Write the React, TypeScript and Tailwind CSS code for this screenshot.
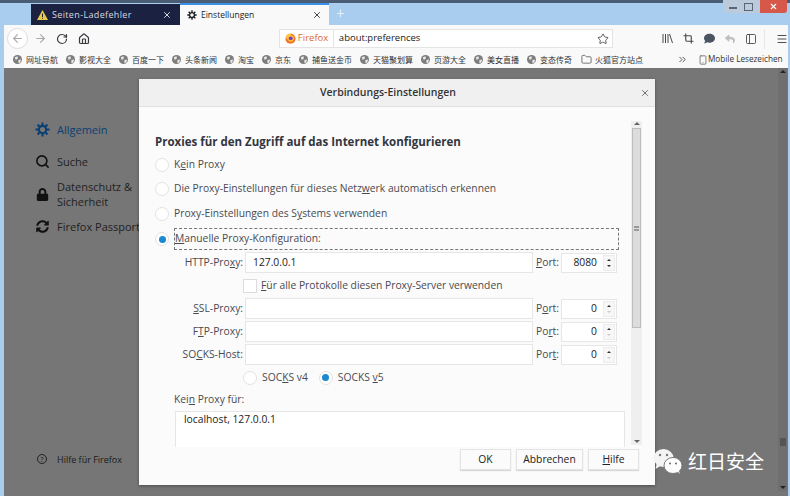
import { ArrowLeft, ArrowRight, ChevronsRight, Crop, Folder, Home, Menu, PanelLeft, Plus, RotateCw, Search, Smartphone, Star, X } from "lucide-react";
import { FaComment, FaLock, FaReply, FaSyncAlt } from "react-icons/fa";

const bookmarks = ["网址导航", "影视大全", "百度一下", "头条新闻", "淘宝", "京东", "捕鱼送金币", "天猫聚划算", "页游大全", "美女直播", "变态传奇"];

const Gear = ({ color, size }: { color: string; size: number }) => (
    <svg width={size} height={size} viewBox="0 0 16 16" fill="none">
        <g stroke={color} strokeWidth="2.2" strokeLinecap="butt">
            <path d="M8 0.5V3.5M8 12.5V15.5M0.5 8H3.5M12.5 8H15.5M2.7 2.7L4.8 4.8M11.2 11.2L13.3 13.3M2.7 13.3L4.8 11.2M11.2 4.8L13.3 2.7" />
        </g>
        <circle cx="8" cy="8" r="3.9" stroke={color} strokeWidth="2.2" />
    </svg>
);

const GlobeIcon = () => (
    <svg width="9" height="9" viewBox="0 0 10 10" className="shrink-0">
        <circle cx="5" cy="5" r="5" fill="#7d7d7d" />
        <path d="M2 2.5L5 1.5L5.5 4L3 5.5ZM6 5.5L9 5L8 8.5L6 9Z" fill="#e8e8e8" />
    </svg>
);

const FirefoxLogo = () => (
    <svg width="11" height="11" viewBox="0 0 14 14" className="shrink-0">
        <circle cx="7" cy="7.4" r="6.4" fill="#f36f24" />
        <path d="M1 5C2 1.500 6 0 9 0.800C7.500 1.500 7.500 2.500 8 3C10 3 11.500 4.500 11.500 7C11.500 9.500 9.500 11 7.500 11C5.500 11 4 9.800 3.800 8.500C2.500 8 1.500 6.500 1 5Z" fill="#ffc43d" />
        <circle cx="7.300" cy="6.800" r="2.500" fill="#7b3fc0" />
    </svg>
);

const Wechat = () => (
    <svg width="31" height="28" viewBox="0 0 31 28">
        <ellipse cx="11.500" cy="11" rx="10" ry="9" fill="#f4f4f4" />
        <path d="M5 16L3.500 22L10 18Z" fill="#f4f4f4" />
        <ellipse cx="21" cy="18.500" rx="9" ry="8" fill="#ffffff" stroke="#777777" strokeWidth="1" />
        <path d="M25 24L28 27L26 22Z" fill="#ffffff" />
        <circle cx="8" cy="8" r="1.200" fill="#777777" />
        <circle cx="15" cy="8" r="1.200" fill="#777777" />
        <circle cx="18" cy="16.500" r="1.100" fill="#777777" />
        <circle cx="24" cy="16.500" r="1.100" fill="#777777" />
    </svg>
);

const Radio = ({ checked }: { checked?: boolean }) => (
    <span className="flex h-[14px] w-[14px] shrink-0 items-center justify-center rounded-full border border-[#e2e2e2] bg-white">
        {checked && <span className="h-[7px] w-[7px] rounded-full bg-[#1b88d0]" />}
    </span>
);

const Spinner = ({ value, up }: { value: string; up?: boolean }) => (
    <div className="flex h-[20px] w-[56px] items-center border border-[#e6e6e6] bg-white">
        <span className="flex-1 pr-[6px] text-right text-[#222222]">{value}</span>
        <div className="mr-[1px] flex h-[16px] w-[12px] flex-col items-center justify-center gap-[4px] border border-[#ececec] bg-[#f7f7f7]">
            <span className="h-0 w-0 border-x-[2px] border-b-[2px] border-x-transparent border-b-[#333333]" />
            <span className={up ? "h-0 w-0 border-x-[2px] border-t-[2px] border-x-transparent border-t-[#cccccc]" : "h-0 w-0 border-x-[2px] border-t-[2px] border-x-transparent border-t-[#333333]"} />
        </div>
    </div>
);

const ProxyRow = ({ label, value, port, portLabel, up }: { label: React.ReactNode; value?: string; port: string; portLabel: React.ReactNode; up?: boolean }) => (
    <div className="flex h-[23px] items-center">
        <div className="w-[90px] pr-[2px] text-right text-[#4a4a4f]">{label}</div>
        <div className="flex h-[21px] w-[288px] items-center border border-[#e6e6e6] bg-white pl-[7px] text-[#222222]">{value}</div>
        <div className="w-[28px] pl-[3px] text-[#4a4a4f]">{portLabel}</div>
        <Spinner value={port} up={up} />
    </div>
);

const SideItem = ({ icon, children, className }: { icon: React.ReactNode; children: React.ReactNode; className?: string }) => (
    <div className={`flex items-center ${className ?? ""}`}>
        <div className="flex w-[22px] shrink-0 justify-center">{icon}</div>
        <div className="ml-[4px] whitespace-nowrap leading-[15px]">{children}</div>
    </div>
);

const DialogButton = ({ children, width }: { children: React.ReactNode; width: string }) => (
    <div className={`flex h-[21px] items-center justify-center border border-[#e4e4e4] bg-[#fbfbfb] text-[#222222] shadow-[0_1px_1px_#d8d8d8] ${width}`}>{children}</div>
);

export default function App() {
    return (
        <div className="relative flex h-[496px] w-[790px] flex-col overflow-hidden bg-[#a9cdee] text-[11px] [font-family:'Open_Sans','Noto_Sans_CJK_SC',sans-serif]">
            {/* title bar and tabs */}
            <div className="flex h-[25px] items-end border-t-[3px] border-[#4b5d75] pl-[31px]">
                <div className="flex h-[21px] w-[149px] items-center bg-[#1b2141] pl-[6px] pr-[8px] text-[9px] tracking-[0.35px] text-[#d7d9e0]">
                    <svg width="11" height="10" viewBox="0 0 11 10">
                        <path d="M5.500 0L11 10H0Z" fill="#e8c94a" />
                        <path d="M5 3.500H6V7H5ZM5 7.800H6V8.800H5Z" fill="#222222" />
                    </svg>
                    <span className="ml-[4px] flex-1">Seiten-Ladefehler</span>
                    <X size={10} strokeWidth={2.2} color="#e8e8ee" />
                </div>
                <div className="flex h-[22px] w-[149px] items-center border-t-2 border-[#3a90e8] bg-[#f9f9fa] pl-[7px] pr-[7px] text-[8.5px] text-[#222222]">
                    <Gear color="#1f1f1f" size={10} />
                    <span className="ml-[4px] flex-1">Einstellungen</span>
                    <X size={10} strokeWidth={2.2} color="#333333" />
                </div>
                <Plus size={11} strokeWidth={2.5} color="#e3effa" className="mb-[6px] ml-[6px]" />
                <div className="-mt-[3px] ml-auto mr-[3px] flex h-[13px] self-start">
                    <div className="flex w-[37px] items-center rounded-bl-[3px] bg-[#bccbdb]">
                        <span className="ml-[6px] mt-[3px] h-[2px] w-[8px] border border-[#5a6675] bg-white" />
                        <span className="ml-[7px] h-[8px] w-[9px] border border-[#5a6675]" />
                    </div>
                    <div className="flex w-[27px] items-center justify-center rounded-br-[3px] bg-[#d6584a]">
                        <X size={9} strokeWidth={3} color="#ffffff" />
                    </div>
                </div>
            </div>

            <div className="ml-[4px] mr-[2px] flex flex-1 flex-col">
                {/* nav bar */}
                <div className="flex h-[27px] items-center bg-[#f9f9fa] pl-[3px] text-[#4a4a4f]">
                    <div className="flex h-[21px] w-[21px] items-center justify-center rounded-full border border-[#dddddd] bg-white">
                        <ArrowLeft size={13} color="#a8a8ac" />
                    </div>
                    <ArrowRight size={13} color="#a8a8ac" className="ml-[6px]" />
                    <RotateCw size={12} strokeWidth={2.4} color="#3a3a3f" className="ml-[9px]" />
                    <Home size={12} strokeWidth={2.4} color="#3a3a3f" className="ml-[10px]" />
                    <div className="ml-[189px] flex h-[19px] w-[335px] items-center border border-[#e4e4e4] bg-white">
                        <div className="flex h-full w-[54px] items-center border-r border-[#e4e4e4] pl-[5px] text-[9.5px] text-[#e0682b]">
                            <FirefoxLogo />
                            <span className="ml-[2px]">Firefox</span>
                        </div>
                        <span className="ml-[5px] flex-1 text-[9.5px] text-[#222222]">about:preferences</span>
                        <Star size={12} strokeWidth={1.800} color="#4a4a4f" className="mr-[3px]" />
                    </div>
                    <div className="ml-[49px] flex items-center gap-[10px]">
                        <svg width="11" height="11" viewBox="0 0 11 11" stroke="#4a4a4f" strokeWidth="1">
                            <path d="M1 1V10M3.500 1V10M6 1V10M7.500 1L10.500 10" />
                        </svg>
                        <Crop size={11} strokeWidth={2.5} color="#4a4a4f" />
                        <FaComment size={11} color="#4a5560" />
                        <FaReply size={10} color="#c0c0c2" />
                        <PanelLeft size={12} strokeWidth={1.800} color="#4a4a4f" />
                        <div className="-ml-[3px] h-[20px] border-l border-[#e8e8e8]" />
                        <Menu size={12} strokeWidth={1.800} color="#3a3a3f" className="ml-[1px]" />
                    </div>
                </div>

                {/* bookmarks bar */}
                <div className="flex h-[16px] items-center bg-[#f9f9fa] pb-[1px] pl-[9px] text-[8px] text-[#333333]">
                    <div className="flex items-center gap-[8px]">
                        {bookmarks.map((name) => (
                            <div key={name} className="flex items-center gap-[4px]">
                                <GlobeIcon />
                                <span className="whitespace-nowrap">{name}</span>
                            </div>
                        ))}
                        <div className="ml-[1px] flex items-center gap-[3px]">
                            <Folder size={11} color="#6a6a6a" />
                            <span className="whitespace-nowrap">火狐官方站点</span>
                        </div>
                    </div>
                    <ChevronsRight size={11} color="#4a4a4f" className="ml-[34px]" />
                    <Smartphone size={10} color="#6a6a6a" className="ml-[10px]" />
                    <span className="whitespace-nowrap text-[8.2px]">Mobile Lesezeichen</span>
                </div>

                {/* dimmed page */}
                <div className="flex flex-1 bg-[#767676] pb-[5px]">
                    <div className="flex w-[135px] flex-col pl-[27px] pt-[54px] text-[11px] text-[#1f1f1f]">
                        <SideItem icon={<Gear color="#0a3f73" size={15} />} className="text-[#0a3f73]">Allgemein</SideItem>
                        <SideItem icon={<Search size={15} strokeWidth={2.6} color="#111111" />} className="mt-[17px]">Suche</SideItem>
                        <SideItem icon={<FaLock size={13} color="#111111" />} className="mt-[10px]">Datenschutz &amp;<br />Sicherheit</SideItem>
                        <SideItem icon={<FaSyncAlt size={13} color="#111111" />} className="mt-[10px]">Firefox Passport</SideItem>
                        <div className="mt-auto mb-[25px] flex items-center text-[9px] text-[#1a1a1a]">
                            <div className="ml-[6px] flex h-[10px] w-[10px] items-center justify-center rounded-full border border-[#222222] text-[7px] leading-none">?</div>
                            <span className="ml-[10px] whitespace-nowrap">Hilfe für Firefox</span>
                        </div>
                    </div>
                    <div className="flex-1" />
                    <div className="mr-[1px] flex w-[9px] flex-col items-center justify-between bg-[#6f6f6f] py-[2px]">
                        <span className="h-0 w-0 border-x-[3px] border-b-[3px] border-x-transparent border-b-[#222222]" />
                        <span className="mt-[325px] h-[8px] w-[6px] bg-[#555555]" />
                        <span className="h-0 w-0 border-x-[3px] border-t-[3px] border-x-transparent border-t-[#222222]" />
                    </div>
                </div>
            </div>

            {/* connection settings dialog */}
            <div className="absolute left-[139px] top-[79px] flex h-[406px] w-[516px] flex-col bg-[#fbfbfb] text-[10.3px] text-[#4a4a4f] shadow-[0_1px_3px_rgba(0,0,0,0.35)]">
                <div className="relative flex h-[28px] shrink-0 items-center justify-center border-b border-[#e0e0e0] bg-[#f0f0f1] pr-[18px] pt-[1px] text-[10.500px] font-semibold text-[#333333]">
                    Verbindungs-Einstellungen
                    <X size={10} strokeWidth={2} color="#555555" className="absolute right-[5px] top-[9px]" />
                </div>

                <div className="flex h-[340px] overflow-hidden">
                    <div className="w-[492px] shrink-0 pl-[16px] pt-[27px]">
                        <div className="h-[16px] text-[11.5px] font-bold leading-[16px] text-[#333640]">Proxies für den Zugriff auf das Internet konfigurieren</div>
                        <div className="mt-[3px] flex h-[24px] items-center gap-[5px]"><Radio /><span>K<u>e</u>in Proxy</span></div>
                        <div className="flex h-[24px] items-center gap-[5px]"><Radio /><span>Die Proxy-Einstellungen für dieses Netz<u>w</u>erk automatisch erkennen</span></div>
                        <div className="mt-[1px] flex h-[24px] items-center gap-[5px]"><Radio /><span>Proxy-Einstellungen des S<u>y</u>stems verwenden</span></div>
                        <div className="mt-[1px] flex h-[24px] items-center gap-[5px]">
                            <Radio checked />
                            <span className="flex h-[22px] w-[445px] items-center border border-dashed border-[#777777]"><span><u>M</u>anuelle Proxy-Konfiguration:</span></span>
                        </div>
                        <div>
                            <ProxyRow label={<>HTTP-Pro<u>x</u>y:</>} value="127.0.0.1" port="8080" portLabel={<><u>P</u>ort:</>} />
                            <div className="flex h-[23px] items-center pl-[88px]">
                                <span className="h-[14px] w-[14px] border border-[#dcdcdc] bg-white" />
                                <span className="ml-[4px]"><u>F</u>ür alle Protokolle diesen Proxy-Server verwenden</span>
                            </div>
                            <ProxyRow label={<><u>S</u>SL-Proxy:</>} port="0" portLabel={<>P<u>o</u>rt:</>} up />
                            <ProxyRow label={<>F<u>T</u>P-Proxy:</>} port="0" portLabel={<>Po<u>r</u>t:</>} up />
                            <ProxyRow label={<>SO<u>C</u>KS-Host:</>} port="0" portLabel={<>Por<u>t</u>:</>} up />
                            <div className="flex h-[23px] items-center pl-[88px]">
                                <Radio />
                                <span className="ml-[5px]">SOC<u>K</u>S v4</span>
                                <span className="ml-[11px]"><Radio checked /></span>
                                <span className="ml-[5px]">SOCKS <u>v</u>5</span>
                            </div>
                        </div>
                        <div className="ml-[19px] mt-[3px] h-[15px] leading-[15px]">Kei<u>n</u> Proxy für:</div>
                        <div className="ml-[20px] mt-[4px] h-[60px] w-[450px] border border-[#e6e6e6] bg-white pl-[8px] text-[#222222]">localhost, 127.0.0.1</div>
                    </div>
                    <div className="mb-[2px] mt-[14px] flex w-[11px] flex-col items-center bg-[#efefef]">
                        <span className="mt-[1px] h-0 w-0 border-x-[3px] border-b-[3px] border-x-transparent border-b-[#666666]" />
                        <span className="mt-[3px] flex h-[200px] w-[9px] items-center justify-center border border-[#bdbdbd] bg-[#dcdcdc]">
                            <span className="h-[5px] w-[5px] border-y-2 border-[#9a9a9a]" />
                        </span>
                        <span className="mb-[2px] mt-auto h-0 w-0 border-x-[3px] border-t-[3px] border-x-transparent border-t-[#666666]" />
                    </div>
                </div>

                <div className="flex flex-1 justify-end gap-[5px] pr-[16px] pt-[2px]">
                    <DialogButton width="w-[51px]">OK</DialogButton>
                    <DialogButton width="w-[67px]">Abbrechen</DialogButton>
                    <DialogButton width="w-[51px]"><span><u>H</u>ilfe</span></DialogButton>
                </div>
            </div>

            {/* watermark */}
            <div className="absolute left-[652px] top-[447px] flex items-center gap-[5px] text-[19px] leading-[28px] text-white [font-family:'Noto_Sans_CJK_SC',sans-serif]">
                <Wechat />
                <span>红日安全</span>
            </div>
        </div>
    );
}
